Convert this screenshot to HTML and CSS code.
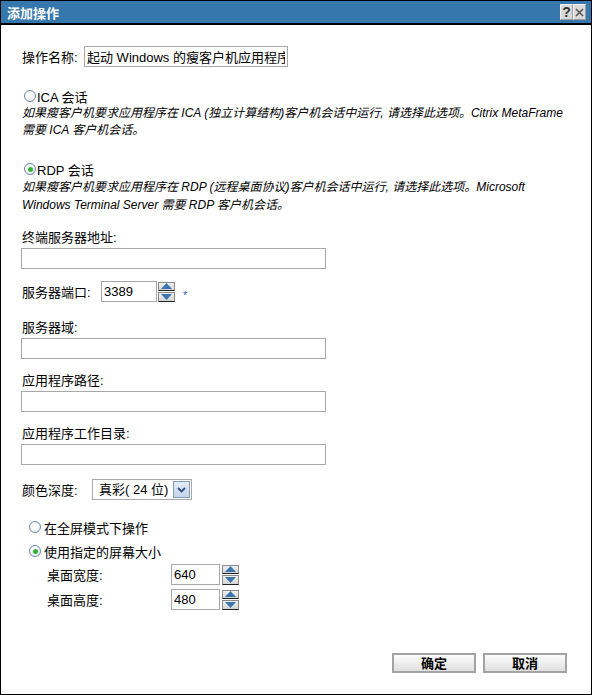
FILE: index.html
```html
<!DOCTYPE html>
<html lang="zh-CN">
<head>
  <meta charset="UTF-8" />
  <title>添加操作</title>
  <link rel="stylesheet" href="styles.css">
</head>
<body>
  <div class="dialog">

    <!-- Title bar -->
    <div class="titlebar">
      <span class="title">添加操作</span>
      <div class="title-btns">
        <span class="tbtn">?</span>
        <span class="tbtn">
          <svg width="9" height="9" viewBox="0 0 9 9"><path d="M1 1 L8 8 M8 1 L1 8" stroke="#555" stroke-width="1.6"/></svg>
        </span>
      </div>
    </div>

    <!-- Form -->
    <div class="content">
      <div class="row name-row">
        <label>操作名称:</label>
        <input class="text name-input" type="text" value="起动 Windows 的瘦客户机应用程序">
      </div>

      <div class="radio-row ica"><span class="radio"></span>ICA 会话</div>
      <p class="desc">如果瘦客户机要求应用程序在 ICA (独立计算结构)客户机会话中运行, 请选择此选项。Citrix MetaFrame<br>需要 ICA 客户机会话。</p>

      <div class="radio-row rdp"><span class="radio checked"></span>RDP 会话</div>
      <p class="desc desc-rdp">如果瘦客户机要求应用程序在 RDP (远程桌面协议)客户机会话中运行, 请选择此选项。Microsoft<br>Windows Terminal Server 需要 RDP 客户机会话。</p>

      <div class="field field-addr">
        <label>终端服务器地址:</label>
        <input class="text wide" type="text">
      </div>

      <div class="row port-row">
        <label>服务器端口:</label>
        <input class="text num" type="text" value="3389">
        <div class="spin">
          <span class="spin-btn"><svg width="11" height="6" viewBox="0 0 11 6"><polygon points="0,6 5.5,0 11,6" fill="#3d74b0"/></svg></span>
          <span class="spin-btn"><svg width="11" height="6" viewBox="0 0 11 6"><polygon points="0,0 5.5,6 11,0" fill="#3d74b0"/></svg></span>
        </div>
        <span class="required">*</span>
      </div>

      <div class="field field-domain">
        <label>服务器域:</label>
        <input class="text wide" type="text">
      </div>

      <div class="field">
        <label>应用程序路径:</label>
        <input class="text wide" type="text">
      </div>

      <div class="field">
        <label>应用程序工作目录:</label>
        <input class="text wide" type="text">
      </div>

      <div class="row depth-row">
        <label>颜色深度:</label>
        <div class="select">
          <span class="select-value">真彩( 24 位)</span>
          <span class="select-btn">
            <svg width="9" height="6" viewBox="0 0 9 6"><path d="M1 1 L4.5 4.5 L8 1" stroke="#2a4f80" stroke-width="1.8" fill="none"/></svg>
          </span>
        </div>
      </div>

      <div class="radio-row mode-row first"><span class="radio"></span>在全屏模式下操作</div>
      <div class="radio-row mode-row"><span class="radio checked"></span>使用指定的屏幕大小</div>

      <div class="row size-row first">
        <label>桌面宽度:</label>
        <input class="text size" type="text" value="640">
        <div class="spin">
          <span class="spin-btn"><svg width="11" height="6" viewBox="0 0 11 6"><polygon points="0,6 5.5,0 11,6" fill="#3d74b0"/></svg></span>
          <span class="spin-btn"><svg width="11" height="6" viewBox="0 0 11 6"><polygon points="0,0 5.5,6 11,0" fill="#3d74b0"/></svg></span>
        </div>
      </div>
      <div class="row size-row">
        <label>桌面高度:</label>
        <input class="text size" type="text" value="480">
        <div class="spin">
          <span class="spin-btn"><svg width="11" height="6" viewBox="0 0 11 6"><polygon points="0,6 5.5,0 11,6" fill="#3d74b0"/></svg></span>
          <span class="spin-btn"><svg width="11" height="6" viewBox="0 0 11 6"><polygon points="0,0 5.5,6 11,0" fill="#3d74b0"/></svg></span>
        </div>
      </div>
    </div>

    <!-- Buttons -->
    <div class="actions">
      <button class="btn">确定</button>
      <button class="btn">取消</button>
    </div>

  </div>
</body>
</html>
```

FILE: styles.css
```css
/* Basic Reset */
* {
  box-sizing: border-box;
}

body {
  margin: 0;
  font-family: "Liberation Sans", "Noto Sans CJK SC", sans-serif;
  font-size: 13px;
  color: #000;
  background: #fff;
}

/* Dialog frame */
.dialog {
  width: 592px;
  height: 695px;
  border: 1px solid #000;
  display: flex;
  flex-direction: column;
}

/* Title bar */
.titlebar {
  height: 24px;
  background: #3677ad;
  border-bottom: 2px solid #000;
  display: flex;
  align-items: center;
  justify-content: space-between;
  padding: 0 5px 0 6px;
}

.title {
  color: #fff;
  font-weight: bold;
  font-size: 13px;
  font-family: "Noto Sans CJK SC", sans-serif;
}

.title-btns {
  display: flex;
}

.tbtn {
  width: 13px;
  height: 16px;
  background: #d9d9d9;
  border: 1px solid #f2f2f2;
  border-right-color: #a0a0a0;
  border-bottom-color: #a0a0a0;
  display: flex;
  align-items: center;
  justify-content: center;
  font-weight: bold;
  font-size: 14px;
  color: #333;
  line-height: 1;
}

/* Form body */
.content {
  padding: 21px 21px 0 21px;
}

.row {
  display: flex;
  align-items: center;
  height: 21px;
}

.text {
  height: 21px;
  border: 1px solid #a8a8a8;
  padding: 0 2px;
  font-family: "Liberation Sans", "Noto Sans CJK SC", sans-serif;
  font-size: 13px;
  color: #000;
  background: #fff;
  outline: none;
}

.name-row label {
  width: 62px;
}

.name-input {
  width: 204px;
}

/* Radio buttons */
.radio-row {
  display: flex;
  align-items: center;
  height: 16px;
  gap: 1px;
  padding-left: 2px;
}

.ica {
  margin-top: 21px;
}

.rdp {
  margin-top: 22px;
}

.radio {
  width: 12px;
  height: 12px;
  border-radius: 50%;
  border: 1px solid #6e88a8;
  background: radial-gradient(circle at 40% 40%, #fff 30%, #dde3ea 100%);
  display: flex;
  align-items: center;
  justify-content: center;
}

.radio.checked::after {
  content: "";
  width: 5px;
  height: 5px;
  border-radius: 50%;
  background: #2db52d;
}

.desc {
  margin: 1px 0 0;
  font-size: 12px;
  font-style: italic;
  line-height: 17px;
  white-space: nowrap;
}

.desc-rdp {
  line-height: 18px;
}

/* Labelled text fields */
.field {
  margin-top: 14px;
}

.field label {
  display: block;
  line-height: 16px;
  margin-bottom: 2px;
}

.field-addr {
  margin-top: 16px;
}

.field-domain {
  margin-top: 18px;
}

.wide {
  width: 305px;
  margin-left: -1px;
}

.port-row {
  margin-top: 12px;
}

.port-row label {
  width: 79px;
}

.num {
  width: 56px;
}

/* Spinner */
.spin {
  display: flex;
  flex-direction: column;
  gap: 1px;
  margin-left: 1px;
  height: 20px;
}

.spin-btn {
  width: 17px;
  height: 10px;
  background: linear-gradient(#f0f0f0, #d4d4d4);
  border: 1px solid #8a8a8a;
  border-bottom-color: #222;
  display: flex;
  align-items: center;
  justify-content: center;
}

.required {
  color: #2a5fb0;
  font-size: 11px;
  margin-left: 8px;
  align-self: flex-end;
  line-height: 14px;
}

/* Select */
.depth-row {
  margin-top: 14px;
}

.depth-row label {
  width: 70px;
}

.select {
  display: flex;
  height: 21px;
  border: 1px solid #a8a8a8;
  width: 100px;
  padding: 1px 1px 1px 0;
}

.select-value {
  flex: 1;
  padding-left: 6px;
  font-size: 13px;
  line-height: 17px;
}

.select-btn {
  width: 17px;
  border: 1px solid #7f9db9;
  background: linear-gradient(#e4ecf7, #c4d3e8);
  display: flex;
  align-items: center;
  justify-content: center;
}

/* Screen mode */
.mode-row {
  padding-left: 7px;
  margin-top: 8px;
  gap: 3px;
}

.mode-row.first {
  margin-top: 19px;
}

.size-row {
  padding-left: 25px;
  margin-top: 4px;
}

.size-row.first {
  margin-top: 5px;
}

.size-row label {
  width: 124px;
}

.size {
  width: 49px;
}

.size + .spin {
  margin-left: 2px;
}

/* Bottom buttons */
.actions {
  margin-top: auto;
  display: flex;
  justify-content: flex-end;
  gap: 7px;
  padding: 0 24px 21px 0;
}

.btn {
  width: 84px;
  height: 20px;
  border: 2px solid #a3a3a3;
  background: linear-gradient(#fcfcfc, #e0e0e0);
  font-family: "Noto Sans CJK SC", sans-serif;
  font-weight: bold;
  font-size: 13px;
  line-height: 14px;
  padding: 0;
  color: #000;
}
```
